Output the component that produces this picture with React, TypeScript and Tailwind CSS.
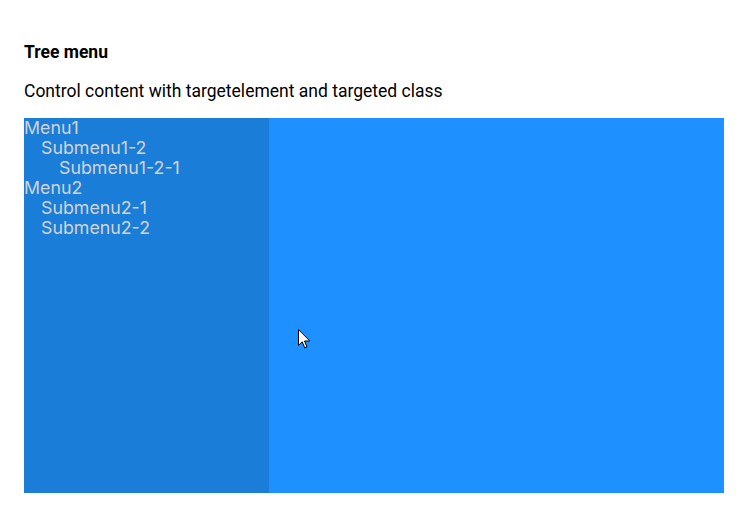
import React from "react";

export default function App() {
  const items: [string, number][] = [
    ["Menu1", 0],
    ["Submenu1-2", 1],
    ["Submenu1-2-1", 2],
    ["Menu2", 0],
    ["Submenu2-1", 1],
    ["Submenu2-2", 1],
  ];
  const pad = ["pl-0", "pl-[17px]", "pl-[35px]"];
  return (
    <div className="relative min-h-[519px] bg-white px-6 pt-[41px] font-['Roboto',sans-serif] text-black">
      <h2 className="text-[17.5px] font-bold leading-[22px]">Tree menu</h2>
      <p className="mt-[17px] text-[17.5px] leading-[22px]">Control content with targetelement and targeted class</p>
      <div className="mt-[16px] flex h-[375px] w-[700px]">
        <div className="w-[245px] bg-[#1a7dd8] font-['Inter',sans-serif] text-[17.8px] leading-[20px] text-[#d3d3d3]">
          {items.map(([t, l]) => (
            <div key={t} className={pad[l]}>{t}</div>
          ))}
        </div>
        <div className="flex-1 bg-[#1e90ff]" />
      </div>
      <svg className="absolute left-[298px] top-[329px]" width="13" height="20" viewBox="0 0 13 20">
        <path d="M0.5 0.5 L0.5 16.5 L4.2 12.8 L6.8 19 L9 18 L6.5 12 L11.8 12 Z" fill="white" stroke="black" strokeWidth="1" />
      </svg>
    </div>
  );
}
